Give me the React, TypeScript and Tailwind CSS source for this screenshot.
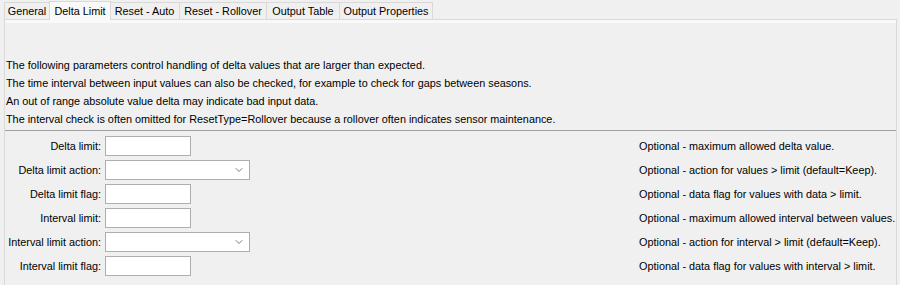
import { ChevronDown } from "lucide-react";

const tabs = [
  { name: "General", w: "w-[46px]" },
  { name: "Delta Limit", w: "w-[62px]", active: true },
  { name: "Reset - Auto", w: "w-[71px]" },
  { name: "Reset - Rollover", w: "w-[88px]" },
  { name: "Output Table", w: "w-[74px]" },
  { name: "Output Properties", w: "w-[94px]" },
];

const notes = [
  "The following parameters control handling of delta values that are larger than expected.",
  "The time interval between input values can also be checked, for example to check for gaps between seasons.",
  "An out of range absolute value delta may indicate bad input data.",
  "The interval check is often omitted for ResetType=Rollover because a rollover often indicates sensor maintenance.",
];

const fields = [
  { label: "Delta limit:", kind: "text", help: "Optional - maximum allowed delta value." },
  { label: "Delta limit action:", kind: "combo", help: "Optional - action for values > limit (default=Keep)." },
  { label: "Delta limit flag:", kind: "text", help: "Optional - data flag for values with data > limit." },
  { label: "Interval limit:", kind: "text", help: "Optional - maximum allowed interval between values." },
  { label: "Interval limit action:", kind: "combo", help: "Optional - action for interval > limit (default=Keep)." },
  { label: "Interval limit flag:", kind: "text", help: "Optional - data flag for values with interval > limit." },
];

export default function App() {
  return (
    <div
      className="w-[900px] h-[285px] bg-[#f0f0f0] overflow-hidden text-[10.85px] text-black"
      style={{ fontFamily: '"Liberation Sans", Arial, sans-serif' }}
    >
      <div className="flex items-end h-[19px] pl-[4px]">
        {tabs.map((t) =>
          t.active ? (
            <div
              key={t.name}
              className={`${t.w} h-[19px] -mb-px z-10 flex items-center justify-center border border-b-0 border-[#d9d9d9] bg-[#f9f9f9] -mx-px`}
            >
              {t.name}
            </div>
          ) : (
            <div
              key={t.name}
              className={`${t.w} h-[17px] flex items-center justify-center border border-b-0 border-[#d9d9d9] bg-[#f0f0f0] -ml-px first:ml-0 pt-px`}
            >
              {t.name}
            </div>
          ),
        )}
      </div>

      <div className="ml-[4px] w-[893px] h-[266px] border border-b-0 border-[#d9d9d9]">
        <div className="h-[3px] bg-[#f9f9f9]" />
        <div className="pt-[33px] pl-[1px] leading-[18px]">
          {notes.map((n) => (
            <div key={n} className="whitespace-nowrap">
              {n}
            </div>
          ))}
        </div>
        <div className="mt-[2px] h-px bg-[#a0a0a0]" />
        <div className="pt-[5px] flex flex-col gap-[4px]">
          {fields.map((f) => (
            <div key={f.label} className="flex items-center h-[20px]">
              <div className="w-[96px] shrink-0 text-right whitespace-nowrap">{f.label}</div>
              <div className="w-[538px] shrink-0 pl-[4px]">
                {f.kind === "combo" ? (
                  <div className="w-[145px] h-[20px] bg-white border border-[#adadad] flex items-center justify-end pr-[4px]">
                    <ChevronDown className="w-[12px] h-[12px] text-[#505050]" strokeWidth={1.5} />
                  </div>
                ) : (
                  <div className="w-[86px] h-[20px] bg-white border border-[#adadad]" />
                )}
              </div>
              <div className="shrink-0 whitespace-nowrap">{f.help}</div>
            </div>
          ))}
        </div>
      </div>
    </div>
  );
}
